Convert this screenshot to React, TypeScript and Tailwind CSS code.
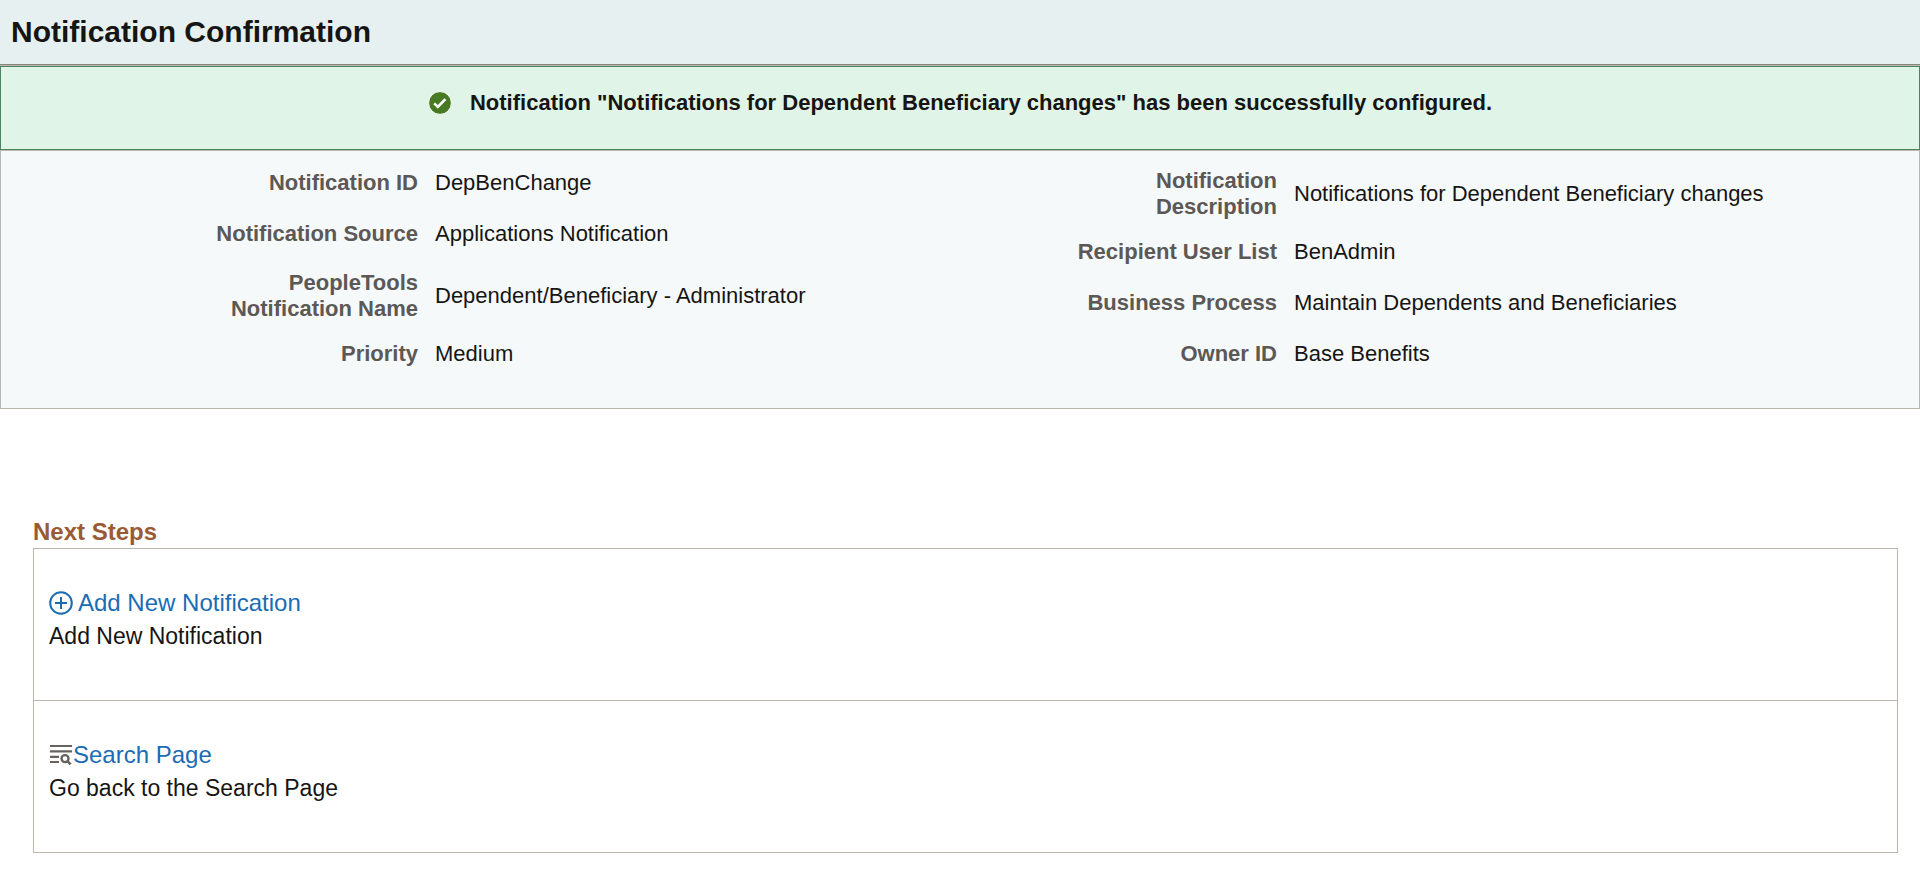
import React from 'react';

interface Field {
  label: string;
  value: string;
}

const leftFields: Field[] = [
  { label: 'Notification ID', value: 'DepBenChange' },
  { label: 'Notification Source', value: 'Applications Notification' },
  { label: 'PeopleTools Notification Name', value: 'Dependent/Beneficiary - Administrator' },
  { label: 'Priority', value: 'Medium' },
];

const rightFields: Field[] = [
  { label: 'Notification Description', value: 'Notifications for Dependent Beneficiary changes' },
  { label: 'Recipient User List', value: 'BenAdmin' },
  { label: 'Business Process', value: 'Maintain Dependents and Beneficiaries' },
  { label: 'Owner ID', value: 'Base Benefits' },
];

const SuccessIcon: React.FC = () => (
  <svg className="h-6 w-6 shrink-0" viewBox="0 0 24 24" aria-hidden="true">
    <circle cx="12" cy="12" r="11.4" fill="#477a22" stroke="#fff" strokeWidth="1" />
    <path d="M6.2 12.4l3.6 3.5 7.6-7.8" fill="none" stroke="#fff" strokeWidth="2.6" />
  </svg>
);

const AddIcon: React.FC = () => (
  <svg className="h-6 w-6 shrink-0" viewBox="0 0 24 24" fill="none" stroke="#1a6cb3" strokeWidth="2" aria-hidden="true">
    <circle cx="12" cy="12" r="10.8" />
    <path d="M12 6v12M6 12h12" />
  </svg>
);

const SearchListIcon: React.FC = () => (
  <svg className="h-6 w-6 shrink-0" viewBox="0 0 24 24" fill="none" stroke="#67625d" strokeWidth="2.2" aria-hidden="true">
    <path d="M1 3h22M1 8.4h22M1 13.8h9M1 19h9" />
    <circle cx="16" cy="15.6" r="3.5" strokeWidth="2.4" />
    <path d="M18.2 17.8l3.4 3.6" strokeWidth="2.6" />
  </svg>
);

const FieldList: React.FC<{ fields: Field[] }> = ({ fields }) => (
  <dl>
    {fields.map((field) => (
      <div key={field.label} className="min-h-[51px] pt-[10px] pb-[7px]">
        <div className="flex min-h-[30px] items-center gap-[17px]">
          <dt className="w-[206px] shrink-0 text-right font-bold text-[#5b5855]">{field.label}</dt>
          <dd>{field.value}</dd>
        </div>
      </div>
    ))}
  </dl>
);

const App: React.FC = () => {
  return (
    <div className="min-h-screen bg-white font-['Liberation_Sans',Arial,sans-serif] text-[22px] leading-[26px] text-[#161513]">
      <header className="border-b border-[#8b8580] bg-[#e7f0f0] px-[11px] py-[14px]">
        <h1 className="text-[30px] leading-9 font-bold">Notification Confirmation</h1>
      </header>

      <main>
        <div className="border-t border-[#bcb6b1]">
          <div
            role="status"
            className="flex items-center justify-center gap-[18px] border border-[#4a8761] bg-[#e0f4e7] pt-[23px] pb-[33px] font-bold"
          >
            <SuccessIcon />
            <p>Notification "Notifications for Dependent Beneficiary changes" has been successfully configured.</p>
          </div>
        </div>

        <section className="grid grid-cols-[1070fr_848fr] border border-[#bcb6b1] bg-[#f5f9fa] pt-[7px] pb-[28px]">
          <div className="pl-[211px]">
            <FieldList fields={leftFields} />
          </div>
          <FieldList fields={rightFields} />
        </section>

        <section className="mt-[107px] mr-[22px] ml-[33px]">
          <h2 className="pb-px text-2xl leading-[31px] font-bold text-[#9a5a34]">Next Steps</h2>
          <ul className="divide-y divide-[#bcb6b1] border border-[#bcb6b1]">
            <li className="px-[15px] pt-[37px] pb-[47px]">
              <a href="#add" className="flex w-fit items-center gap-[5px] text-2xl leading-[33px] text-[#1a6cb3]">
                <AddIcon />
                Add New Notification
              </a>
              <p className="pt-px text-[23px] leading-[33px]">Add New Notification</p>
            </li>
            <li className="px-[15px] pt-[37px] pb-[47px]">
              <a href="#search" className="flex w-fit items-center text-2xl leading-[33px] text-[#1a6cb3]">
                <SearchListIcon />
                Search Page
              </a>
              <p className="pt-px text-[23px] leading-[33px]">Go back to the Search Page</p>
            </li>
          </ul>
        </section>
      </main>
    </div>
  );
};

export default App;
